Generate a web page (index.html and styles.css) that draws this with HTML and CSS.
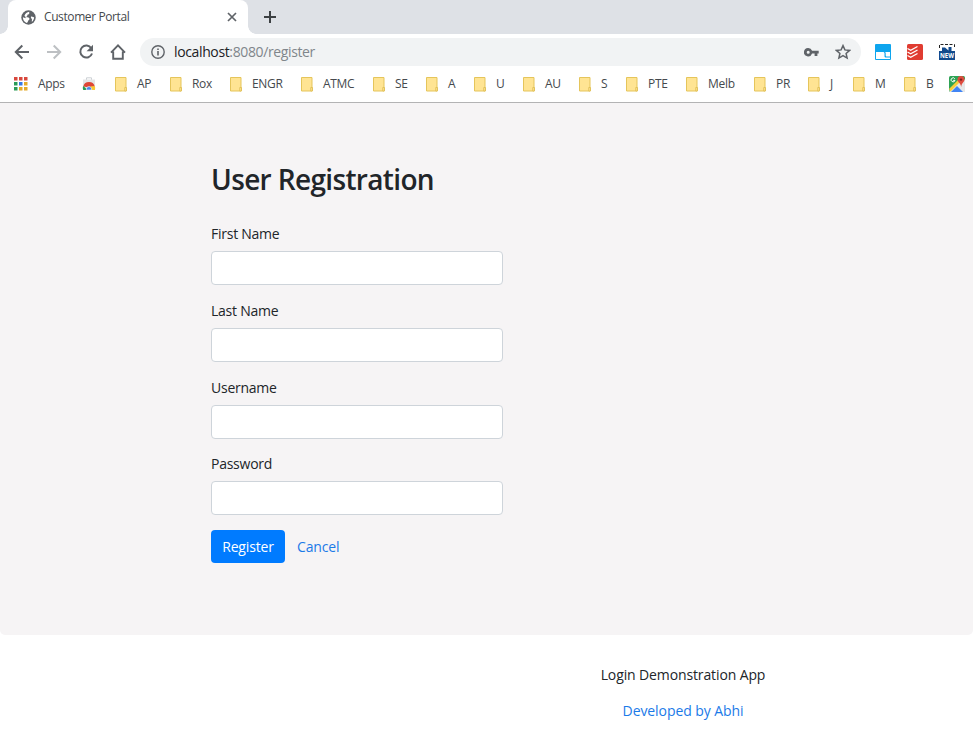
FILE: index.html
```html
<!DOCTYPE html>
<html lang="en">
<head>
<meta charset="utf-8">
<title>Customer Portal</title>
<link rel="stylesheet" href="styles.css">
</head>
<body>
<svg width="0" height="0" class="defs">
  <symbol id="folder" viewBox="0 0 13 15"><path d="M.5.5h10.500v13.500H.5z" fill="#ffe493" stroke="#e5c55b"/><path d="M9.800 14v-3.500h1.700V14z" fill="#ffe493" stroke="#e0c056" stroke-width=".9"/></symbol>
</svg>
<header class="browser">
  <div class="tabs">
    <div class="tab">
      <svg class="globe" width="15" height="15" viewBox="0 0 15 15"><circle cx="7.5" cy="7.5" r="7.2" fill="#5f6368"/><path d="M8.300 1.800c-.4 1.300.5 1.600-.3 2.300-1 .7-1.800.4-1.700 1.500.1.900-1 .8-1 1.700 1.600.2 3 .1 3.200 1.500.2 1.200-1.400 1.100-1.500 2.400-.1.800-.6 1.400-1.200 1.700C3.200 12 1.800 9.900 1.900 7.300L4.700 8.200 4.500 6.800 3.400 6C4.200 3.700 6 2 8.300 1.800z" fill="#fff"/><path d="M10.200 6.600c.9-.2 1.500.8 2.900.5.100 2.100-.9 3.800-2.300 4.800.3-1.200-.1-1.800.2-2.900-.9-.4-1.500-1.300-.8-2.400z" fill="#fff"/></svg>
      <span class="tab-title">Customer Portal</span>
      <svg class="close" width="10" height="10" viewBox="0 0 10 10"><path d="M1 1l8 8M9 1L1 9" stroke="#5f6368" stroke-width="1.7"/></svg>
    </div>
    <svg class="plus" width="12" height="12" viewBox="0 0 12 12"><path d="M6 0v12M0 6h12" stroke="#3c4043" stroke-width="2"/></svg>
  </div>
  <div class="toolbar">
    <svg class="nav" viewBox="0 0 16 16"><path d="M15 8H2M8.300 1.500L1.800 8l6.500 6.500" fill="none" stroke="#5f6368" stroke-width="2"/></svg>
    <svg class="nav" viewBox="0 0 16 16"><path d="M1 8h13M7.700 1.500L14.200 8l-6.500 6.500" fill="none" stroke="#bdc0c3" stroke-width="2"/></svg>
    <svg class="nav" viewBox="0 0 16 16"><path d="M13.300 4.200A6 6 0 1 0 14 9.500" fill="none" stroke="#5f6368" stroke-width="2"/><path d="M15 .8v6.400H8.600z" fill="#5f6368"/></svg>
    <svg class="nav" viewBox="0 0 16 16"><path d="M1 8.700L8 1.400l7 7.300M3.200 7.500v7.300h9.600V7.500" fill="none" stroke="#5f6368" stroke-width="1.900"/></svg>
    <div class="address">
      <svg width="14" height="14" viewBox="0 0 14 14"><circle cx="7" cy="7" r="6.200" fill="none" stroke="#5f6368" stroke-width="1.400"/><path d="M7 6v4.500M7 3.400v1.500" stroke="#5f6368" stroke-width="1.600"/></svg>
      <span class="url"><b>localhost</b>:8080/register</span>
      <svg class="key" width="15" height="9" viewBox="0 0 15 9"><path d="M4.200 0a4.200 4.200 0 0 1 3.900 2.800H14.700V5.600H13.400V8H10.600V5.600H8.100A4.200 4.200 0 1 1 4.200 0zM4.200 2.700a1.500 1.500 0 1 0 0 3 1.500 1.500 0 0 0 0-3z" fill="#5f6368"/></svg>
      <svg class="star" width="16" height="16" viewBox="0 0 16 16"><path d="M8 1.600l1.900 4.300 4.700.5-3.500 3.100 1 4.600L8 11.700l-4.100 2.400 1-4.600L1.400 6.400l4.700-.5z" fill="none" stroke="#5f6368" stroke-width="1.500"/></svg>
    </div>
    <svg class="ext" viewBox="0 0 16 16"><rect width="16" height="16" rx="1" fill="#0ea5ee"/><path d="M1 8h7c1 0 1.500.6 1.500 1.600V12c0 1 .5 1.500 1.500 1.500h4V15H1z" fill="#fff"/><path d="M9.500 8H15v4.500h-3c-1 0-1.300-.4-1.300-1.300V9c0-.5-.5-1-1.200-1z" fill="#fff"/></svg>
    <svg class="ext" viewBox="0 0 16 16"><rect width="16" height="16" rx="1.500" fill="#e03c31"/><path d="M.5 4.500l3.200 1.800L10.500 2.500M.5 8l3.200 1.800L10.500 6M.5 11.500l3.200 1.800L10.500 9.500" fill="none" stroke="#fff" stroke-width="1.300"/></svg>
    <svg class="ext" viewBox="0 0 16 16"><path d="M.5 4V.5H15.500V4" fill="none" stroke="#222" stroke-dasharray="3 1.500"/><path d="M0 7h3V3.500h3l3.500 3V3h3v4H16v9H0z" fill="#124a8c"/><text class="new-label" x="8" y="14" text-anchor="middle" textLength="14" lengthAdjust="spacingAndGlyphs">NEW</text></svg>
  </div>
  <nav class="bookmarks">
    <a class="apps"><svg width="14" height="14" viewBox="0 0 14 14"><path d="M0 0h3.500v3.500H0zM5 0h3.500v3.500H5zM10 0h3.500v3.500H10z" fill="#d8483d"/><path d="M0 5h3.500v3.500H0z" fill="#2b9a57"/><path d="M5 5h3.500v3.500H5z" fill="#3578e5"/><path d="M10 5h3.500v3.500H10zM5 10h3.500v3.500H5zM10 10h3.500v3.500H10z" fill="#e4aa28"/><path d="M0 10h3.500v3.500H0z" fill="#2b9a57"/></svg><span>Apps</span></a>
    <a><svg width="14" height="14" viewBox="0 0 14 14"><path d="M4.500 3V.8h5V3" fill="none" stroke="#ccd0d4"/><path d="M1 2.500h12V13H1z" fill="#e3e5e7"/><path d="M1.200 9.500a6 6 0 0 1 11.600 0l-3 .5H4.500z" fill="#df4636"/><path d="M1.200 9C.6 10.500.8 12 1.300 13h4.500z" fill="#269b53"/><path d="M9 9.300h3.800c.6 1.300.4 2.700 0 3.700H7.500z" fill="#f8c832"/><path d="M4.400 13a2.700 2.700 0 1 1 5.200 0z" fill="#4a86e8" stroke="#fff" stroke-width=".6"/></svg></a>
    <a><svg class="folder"><use href="#folder"/></svg><span>AP</span></a>
    <a><svg class="folder"><use href="#folder"/></svg><span>Rox</span></a>
    <a><svg class="folder"><use href="#folder"/></svg><span>ENGR</span></a>
    <a><svg class="folder"><use href="#folder"/></svg><span>ATMC</span></a>
    <a><svg class="folder"><use href="#folder"/></svg><span>SE</span></a>
    <a><svg class="folder"><use href="#folder"/></svg><span>A</span></a>
    <a><svg class="folder"><use href="#folder"/></svg><span>U</span></a>
    <a><svg class="folder"><use href="#folder"/></svg><span>AU</span></a>
    <a><svg class="folder"><use href="#folder"/></svg><span>S</span></a>
    <a><svg class="folder"><use href="#folder"/></svg><span>PTE</span></a>
    <a><svg class="folder"><use href="#folder"/></svg><span>Melb</span></a>
    <a><svg class="folder"><use href="#folder"/></svg><span>PR</span></a>
    <a><svg class="folder"><use href="#folder"/></svg><span>J</span></a>
    <a><svg class="folder"><use href="#folder"/></svg><span>M</span></a>
    <a><svg class="folder"><use href="#folder"/></svg><span>B</span></a>
    <a><svg width="16" height="16" viewBox="0 0 16 16"><rect width="16" height="16" rx="1.500" fill="#2ea355"/><path d="M0 15L14 2l2 2v12H1z" fill="#e6e8e8"/><path d="M2 16l6-6 6 6z" fill="#4285f4"/><path d="M0 13L10 3l2 2L1.500 15.500z" fill="#f8cd3c"/><path d="M12 0a3.500 3.500 0 0 1 3.500 3.500c0 2.500-3 3.500-3.300 7.500-.4-4-3.700-5-3.700-7.500A3.500 3.500 0 0 1 12 0z" fill="#de4b3e"/><circle cx="12" cy="3.600" r="1.200" fill="#7b231d"/><path d="M5.800 2.800A2 2 0 1 0 6 4.400H4.200" fill="none" stroke="#fff"/></svg></a>
  </nav>
</header>
<main class="panel">
  <h2>User Registration</h2>
  <form>
    <label for="first">First Name</label>
    <input id="first" type="text">
    <label for="last">Last Name</label>
    <input id="last" type="text">
    <label for="user">Username</label>
    <input id="user" type="text">
    <label for="pass">Password</label>
    <input id="pass" type="password">
    <div class="actions">
      <button type="button">Register</button>
      <a class="cancel">Cancel</a>
    </div>
  </form>
</main>
<footer>
  <p class="app-name">Login Demonstration App</p>
  <a class="credit">Developed by Abhi</a>
</footer>
</body>
</html>
```

FILE: styles.css
```css
* { box-sizing: border-box; }
body {
  margin: 0;
  height: 731px;
  overflow: hidden;
  background: #fff;
  color: #212529;
  font: 14px/20px "Open Sans", "Noto Sans", sans-serif;
}
svg { display: block; flex: none; }
.defs { position: absolute; }

.browser { height: 103px; border-bottom: 1px solid #b3b3b4; }
.tabs {
  display: flex;
  align-items: center;
  height: 34px;
  padding-left: 8px;
  background: #dee1e6;
}
.tab {
  position: relative;
  display: flex;
  align-items: center;
  width: 240px;
  height: 34px;
  padding: 0 11px 0 13px;
  background: #fff;
  border-radius: 8px 8px 0 0;
}
.tab::before, .tab::after {
  content: "";
  position: absolute;
  bottom: 0;
  width: 8px;
  height: 8px;
}
.tab::before { left: -8px; background: radial-gradient(circle at 0 0, #dee1e6 7.5px, #fff 8px); }
.tab::after { right: -8px; background: radial-gradient(circle at 100% 0, #dee1e6 7.5px, #fff 8px); }
.tab-title { flex: 1; margin-left: 8px; font-size: 12px; letter-spacing: -0.4px; color: #45494d; }
.plus { margin-left: 16px; }

.toolbar { display: flex; align-items: center; height: 36px; padding-left: 14px; }
.nav { width: 16px; height: 16px; margin-right: 16px; }
.address {
  display: flex;
  align-items: center;
  width: 721px;
  height: 28px;
  margin: 0 14px 0 -2px;
  padding: 0 10px 0 11px;
  border-radius: 14px;
  background: #f1f3f4;
}
.url { flex: 1; margin-left: 9px; letter-spacing: -0.37px; color: #80868b; }
.url b { font-weight: 400; color: #202124; }
.star { margin-left: 16px; }
.ext { width: 16px; height: 16px; margin-right: 16px; }
.new-label { font: bold 7px "Open Sans", sans-serif; fill: #fff; }

.bookmarks {
  display: grid;
  grid-template-columns: 68px 33px 55px 60px 71px 72px 53px 48px 49px 56px 47px 60px 68px 54px 45px 51px 45px 16px;
  align-items: center;
  height: 28px;
  padding-left: 14px;
  font-size: 12px;
  letter-spacing: -0.3px;
  color: #45494d;
}
.bookmarks a { display: flex; align-items: center; white-space: nowrap; }
.bookmarks .apps span { margin-left: 10px; }
.folder { width: 13px; height: 15px; margin-right: 9px; }

.panel {
  height: 532px;
  padding: 58px 0 0 211px;
  background: #f6f4f5;
  border-radius: 0 0 5px 5px;
}
h2 { margin: 0; font-size: 28px; line-height: 36px; font-weight: 600; letter-spacing: -0.65px; }
form { width: 292px; margin-top: 27px; }
label { display: block; height: 20px; margin-bottom: 7px; letter-spacing: -0.25px; }
input {
  display: block;
  width: 292px;
  height: 34px;
  margin: 0 0 15.800px;
  border: 1px solid #ced4da;
  border-radius: 4px;
  background: #fff;
}
.actions { display: flex; align-items: center; margin-top: -1px; }
button {
  width: 74px;
  height: 33px;
  padding: 1px 0 0;
  border: 0;
  border-radius: 4px;
  background: #007bff;
  color: #fff;
  font: inherit;
  letter-spacing: -0.15px;
}
.cancel { margin-left: 12px; padding-top: 1px; letter-spacing: -0.15px; color: #1b7ae8; }
footer {
  display: flex;
  flex-direction: column;
  align-items: center;
  width: 366px;
  margin-left: 500px;
  padding-top: 30px;
}
.app-name { margin: 0 0 16px; letter-spacing: -0.12px; }
.credit { color: #1b7ae8; letter-spacing: -0.08px; }
```
